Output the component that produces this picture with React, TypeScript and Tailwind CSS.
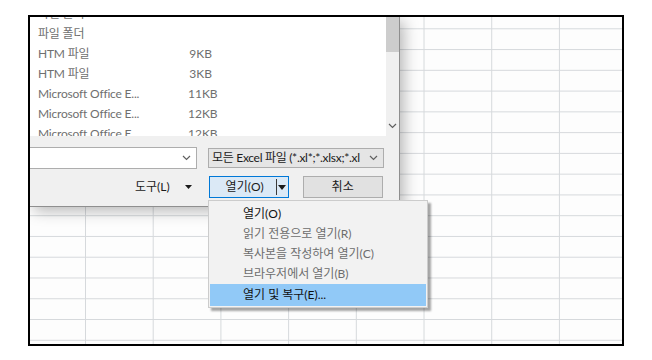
import React from "react";

const files = [
  { type: "파일 폴더", size: "" },
  { type: "파일 폴더", size: "" },
  { type: "HTM 파일", size: "9KB" },
  { type: "HTM 파일", size: "3KB" },
  { type: "Microsoft Office E...", size: "11KB" },
  { type: "Microsoft Office E...", size: "12KB" },
  { type: "Microsoft Office E...", size: "12KB" },
];

const menuItems = [
  { label: "열기(O)", enabled: true },
  { label: "읽기 전용으로 열기(R)", enabled: false },
  { label: "복사본을 작성하여 열기(C)", enabled: false },
  { label: "브라우저에서 열기(B)", enabled: false },
];

function Chevron({ className = "" }: { className?: string }) {
  return (
    <svg width="9" height="6" viewBox="0 0 9 6" className={className}>
      <polyline points="1,1 4.5,4.5 8,1" fill="none" stroke="currentColor" strokeWidth="1.2" />
    </svg>
  );
}

function Caret({ w = 7, h = 4 }: { w?: number; h?: number }) {
  return (
    <svg width={w} height={h} viewBox={`0 0 ${w} ${h}`}>
      <polygon points={`0,0 ${w},0 ${w / 2},${h}`} fill="#1a1a1a" />
    </svg>
  );
}

export default function App() {
  return (
    <div className="w-[652px] h-[360px] bg-white pt-[15px] pl-[28px] font-['Lato','Noto_Sans_CJK_KR',sans-serif] text-[12px]">
      <div className="w-[596px] h-[331px] border-2 border-black">
        {/* sheet behind the dialog */}
        <div className="relative w-full h-full overflow-hidden bg-[#fdfdfd] [background-image:linear-gradient(to_right,#d6d9dc_1px,transparent_1px),linear-gradient(to_bottom,#d6d9dc_1px,transparent_1px)] [background-size:67.71px_20.78px] [background-position:55px_11.3px]">
          {/* open dialog */}
          <div className="absolute left-0 top-0 w-[370px] h-[190px] bg-[#f0f0f0] border-r border-b border-[#8f8f8f] shadow-[4px_4px_14px_rgba(0,0,0,0.28)] flex flex-col">
            <div className="flex h-[119px]">
              <div className="flex-1 bg-white overflow-hidden text-[#6f6f6f]">
                <div className="-mt-[13px]">
                  {files.map((f, i) => (
                    <div key={i} className="flex h-[20px] items-center pl-[8px]">
                      <span className="w-[150px] whitespace-nowrap tracking-[-0.2px]">{f.type}</span>
                      <span className="w-[24px] text-right">{f.size}</span>
                    </div>
                  ))}
                </div>
              </div>
              <div className="w-[13px] bg-[#f0f0f0] flex flex-col items-center">
                <div className="w-full h-[35px] bg-[#cdcdcd]" />
                <div className="flex-1" />
                <Chevron className="text-[#606060] mb-[7px]" />
              </div>
            </div>

            <div className="pt-[11px]">
              <div className="flex items-center h-[22px]">
                <div className="w-[167px] h-[22px] bg-white border border-l-0 border-[#adadad] flex items-center justify-end pr-[5px]">
                  <Chevron className="text-[#606060]" />
                </div>
                <div className="ml-[11px] w-[176px] h-[20px] bg-[#e5e5e5] border border-[#adadad] flex items-center pl-[3px] pr-[5px] text-[#1a1a1a]">
                  <span className="flex-1 whitespace-nowrap overflow-hidden tracking-[-0.3px]">모든 Excel 파일 (*.xl*;*.xlsx;*.xl</span>
                  <Chevron className="text-[#606060] ml-[4px] shrink-0" />
                </div>
              </div>

              <div className="flex items-center h-[22px] mt-[7px]">
                <span className="ml-[105px] text-[#1a1a1a] whitespace-nowrap">도구(L)</span>
                <span className="ml-[15px] flex items-center"><Caret /></span>
                <div className="ml-[17px] w-[80px] h-[22px] border border-[#0078d7] bg-[#dbe9f6] flex items-center text-[#1a1a1a]">
                  <span className="flex-1 text-center pl-[4px]">열기(O)</span>
                  <span className="w-px h-[16px] bg-[#3a3a3a]" />
                  <span className="w-[11px] flex items-center justify-center"><Caret w={8} h={5} /></span>
                </div>
                <div className="ml-[14px] w-[80px] h-[22px] border border-[#adadad] bg-[#e1e1e1] flex items-center justify-center text-[#1a1a1a]">
                  취소
                </div>
              </div>
            </div>
          </div>

          {/* split button menu */}
          <div className="absolute left-[178px] top-[183px] w-[220px] h-[108px] bg-[#f2f2f2] border border-[#cccccc] shadow-[3px_3px_2px_rgba(0,0,0,0.35)] pt-[3px] px-[1px]">
            {menuItems.map((m) => (
              <div
                key={m.label}
                className={`h-[20px] flex items-center pl-[33px] whitespace-nowrap ${m.enabled ? "text-[#111111]" : "text-[#6d6d6d]"}`}
              >
                {m.label}
              </div>
            ))}
            <div className="h-[22px] flex items-center pl-[33px] bg-[#91c9f7] text-[#111111] whitespace-nowrap">
              열기 및 복구(E)...
            </div>
          </div>
        </div>
      </div>
    </div>
  );
}
